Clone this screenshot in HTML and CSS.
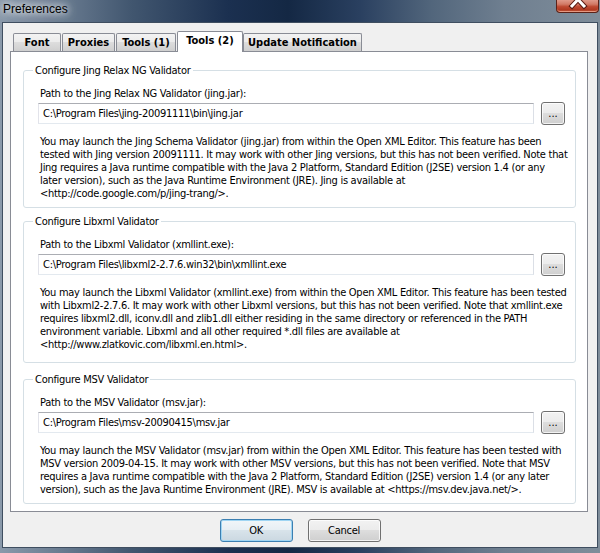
FILE: index.html
```html
<!DOCTYPE html>
<html>
<head>
<meta charset="utf-8">
<title>Preferences</title>
<link rel="stylesheet" href="styles.css">
</head>
<body>
<div class="window">
  <div class="titlebar">
    <span class="title">Preferences</span>
    <span class="close">
      <svg width="43" height="13" viewBox="0 0 43 13">
        <path d="M15 -6 L27 7 M27 -6 L15 7" stroke="#5a1a10" stroke-width="5" stroke-linecap="square" fill="none"/>
        <path d="M15 -6 L27 7 M27 -6 L15 7" stroke="#ffffff" stroke-width="3" stroke-linecap="square" fill="none"/>
      </svg>
    </span>
  </div>
  <div class="client">
    <div class="tabs">
      <div class="tab t-font">Font</div>
      <div class="tab t-proxies">Proxies</div>
      <div class="tab t-tools1">Tools (1)</div>
      <div class="tab t-tools2 selected">Tools (2)</div>
      <div class="tab t-update">Update Notification</div>
    </div>
    <div class="panel">
      <fieldset class="group g1">
        <legend>Configure Jing Relax NG Validator</legend>
        <div class="group-body">
          <div class="label">Path to the Jing Relax NG Validator (jing.jar):</div>
          <div class="row">
            <div class="field">C:\Program Files\jing-20091111\bin\jing.jar</div>
            <button class="browse">...</button>
          </div>
          <p class="para">You may launch the Jing Schema Validator (jing.jar) from within the Open XML Editor. This feature has been<br>tested with Jing version 20091111. It may work with other Jing versions, but this has not been verified. Note that<br>Jing requires a Java runtime compatible with the Java 2 Platform, Standard Edition (J2SE) version 1.4 (or any<br>later version), such as the Java Runtime Environment (JRE). Jing is available at<br>&lt;http://code.google.com/p/jing-trang/&gt;.</p>
        </div>
      </fieldset>
      <fieldset class="group g2">
        <legend>Configure Libxml Validator</legend>
        <div class="group-body">
          <div class="label">Path to the Libxml Validator (xmllint.exe):</div>
          <div class="row">
            <div class="field">C:\Program Files\libxml2-2.7.6.win32\bin\xmllint.exe</div>
            <button class="browse">...</button>
          </div>
          <p class="para">You may launch the Libxml Validator (xmllint.exe) from within the Open XML Editor. This feature has been tested<br>with Libxml2-2.7.6. It may work with other Libxml versions, but this has not been verified. Note that xmllint.exe<br>requires libxml2.dll, iconv.dll and zlib1.dll either residing in the same directory or referenced in the PATH<br>environment variable. Libxml and all other required *.dll files are available at<br>&lt;http://www.zlatkovic.com/libxml.en.html&gt;.</p>
        </div>
      </fieldset>
      <fieldset class="group g3">
        <legend>Configure MSV Validator</legend>
        <div class="group-body">
          <div class="label">Path to the MSV Validator (msv.jar):</div>
          <div class="row">
            <div class="field">C:\Program Files\msv-20090415\msv.jar</div>
            <button class="browse">...</button>
          </div>
          <p class="para">You may launch the MSV Validator (msv.jar) from within the Open XML Editor. This feature has been tested with<br>MSV version 2009-04-15. It may work with other MSV versions, but this has not been verified. Note that MSV<br>requires a Java runtime compatible with the Java 2 Platform, Standard Edition (J2SE) version 1.4 (or any later<br>version), such as the Java Runtime Environment (JRE). MSV is available at &lt;https://msv.dev.java.net/&gt;.</p>
        </div>
      </fieldset>
    </div>
    <div class="buttons">
      <button class="btn default">OK</button>
      <button class="btn">Cancel</button>
    </div>
  </div>
</div>
</body>
</html>
```

FILE: styles.css
```css
html, body {
  margin: 0;
  padding: 0;
}

body {
  width: 600px;
  height: 553px;
  overflow: hidden;
  background: linear-gradient(90deg, #8a99aa 0%, #6a7c91 10%, #41566f 22%, #1b3050 38%, #142844 48%, #2a4060 60%, #52667c 72%, #6f7f90 84%, #7f8d9a 100%);
  font-family: "DejaVu Sans Condensed", "DejaVu Sans", sans-serif;
  font-stretch: condensed;
  font-size: 11px;
  letter-spacing: -0.28px;
  color: #000;
}

.window {
  display: flex;
  flex-direction: column;
  height: 553px;
}

.titlebar {
  height: 22px;
  display: flex;
  justify-content: space-between;
  align-items: flex-start;
  flex: none;
}

.title {
  margin: 3px 0 0 3px;
  font-family: "Liberation Sans", Arial, sans-serif;
  font-stretch: normal;
  font-size: 12px;
  letter-spacing: 0;
  line-height: 13px;
  color: #000;
  text-shadow: 0 0 6px rgba(255, 255, 255, 0.9), 0 0 10px rgba(255, 255, 255, 0.8), 0 0 14px rgba(255, 255, 255, 0.6);
}

.close {
  display: block;
  width: 43px;
  height: 13px;
  margin-right: 1px;
  box-sizing: border-box;
  border: 1px solid #5c2218;
  border-top: none;
  border-radius: 0 0 4px 4px;
  background: linear-gradient(#e0998a 0%, #d27a66 35%, #bf4a32 55%, #b03a22 80%, #c25a3e 100%);
  box-shadow: inset 0 -1px 0 rgba(255, 200, 180, 0.6);
  overflow: hidden;
}

.close svg {
  display: block;
  margin-top: -1px;
}

.client {
  flex: 1;
  margin: 0 2px 5px 2px;
  border: 1px solid #3f4e60;
  background: #f0f0f0;
  display: flex;
  flex-direction: column;
}

.tabs {
  display: flex;
  align-items: flex-end;
  padding: 8px 0 0 10px;
  margin-bottom: -1px;
}

.tab {
  box-sizing: border-box;
  height: 18px;
  margin-bottom: 1px;
  border: 1px solid #898c95;
  border-bottom: none;
  border-radius: 2px 2px 0 0;
  background: linear-gradient(#f3f3f3 0%, #ebebeb 50%, #dddddd 50%, #cfcfcf 100%);
  font-weight: bold;
  font-size: 11px;
  letter-spacing: 0;
  line-height: 17px;
  text-align: center;
  white-space: nowrap;
}

.tab.selected {
  position: relative;
  z-index: 1;
  height: 21px;
  margin-bottom: 0;
  background: #fff;
}

.t-font { width: 48px; margin-right: 1px; }
.t-proxies { width: 53px; margin-right: 1px; }
.t-tools1 { width: 60px; margin-right: 1px; }
.t-tools2 { width: 66px; }
.t-update { width: 119px; }

.panel {
  margin: 0 9px 0 7px;
  border: 1px solid #898c95;
  background: #fff;
  padding: 12px 11px 7px 12px;
}

.group {
  margin: 0;
  padding: 0;
  min-width: 0;
  border: 1px solid #d5dfe5;
  border-radius: 3px;
}

.group legend {
  margin-left: 9px;
  padding: 0 2px;
  line-height: 13px;
}

.g2 { margin-top: 7px; }
.g3 { margin-top: 10px; }

.group-body {
  padding: 10px 0 7px 14px;
}

.g2 .group-body { padding-bottom: 11px; }

.label {
  padding-left: 2px;
  line-height: 13px;
}

.row {
  display: flex;
  align-items: center;
  gap: 7px;
  margin-top: 2px;
}

.field {
  box-sizing: border-box;
  width: 496px;
  height: 21px;
  border: 1px solid;
  border-color: #abadb3 #dbdfe6 #e3e9ef #e2e3ea;
  background: #fff;
  padding-left: 4px;
  line-height: 19px;
  white-space: nowrap;
  overflow: hidden;
}

.browse,
.btn {
  box-sizing: border-box;
  border: 1px solid #707070;
  border-radius: 3px;
  background: linear-gradient(#f2f2f2 0%, #ebebeb 50%, #dddddd 50%, #cfcfcf 100%);
  box-shadow: inset 0 0 0 1px rgba(255, 255, 255, 0.75);
  font-family: "DejaVu Sans Condensed", "DejaVu Sans", sans-serif;
  font-stretch: condensed;
  font-size: 11px;
  letter-spacing: -0.28px;
  color: #000;
  padding: 0;
  margin: 0;
}

.browse {
  width: 24px;
  height: 23px;
  line-height: 21px;
  letter-spacing: 0;
}

.para {
  margin: 10px 0 0 2px;
  line-height: 13px;
  white-space: nowrap;
}

.buttons {
  display: flex;
  justify-content: center;
  gap: 15px;
  margin-top: 7px;
}

.btn {
  width: 73px;
  height: 23px;
}

.btn.default {
  border-color: #3c7fb1;
  background: linear-gradient(#f1f6f9 0%, #e6eef3 50%, #d8e3ea 50%, #cbd8e1 100%);
  box-shadow: inset 0 0 0 1px #9fd5f3;
}
```
